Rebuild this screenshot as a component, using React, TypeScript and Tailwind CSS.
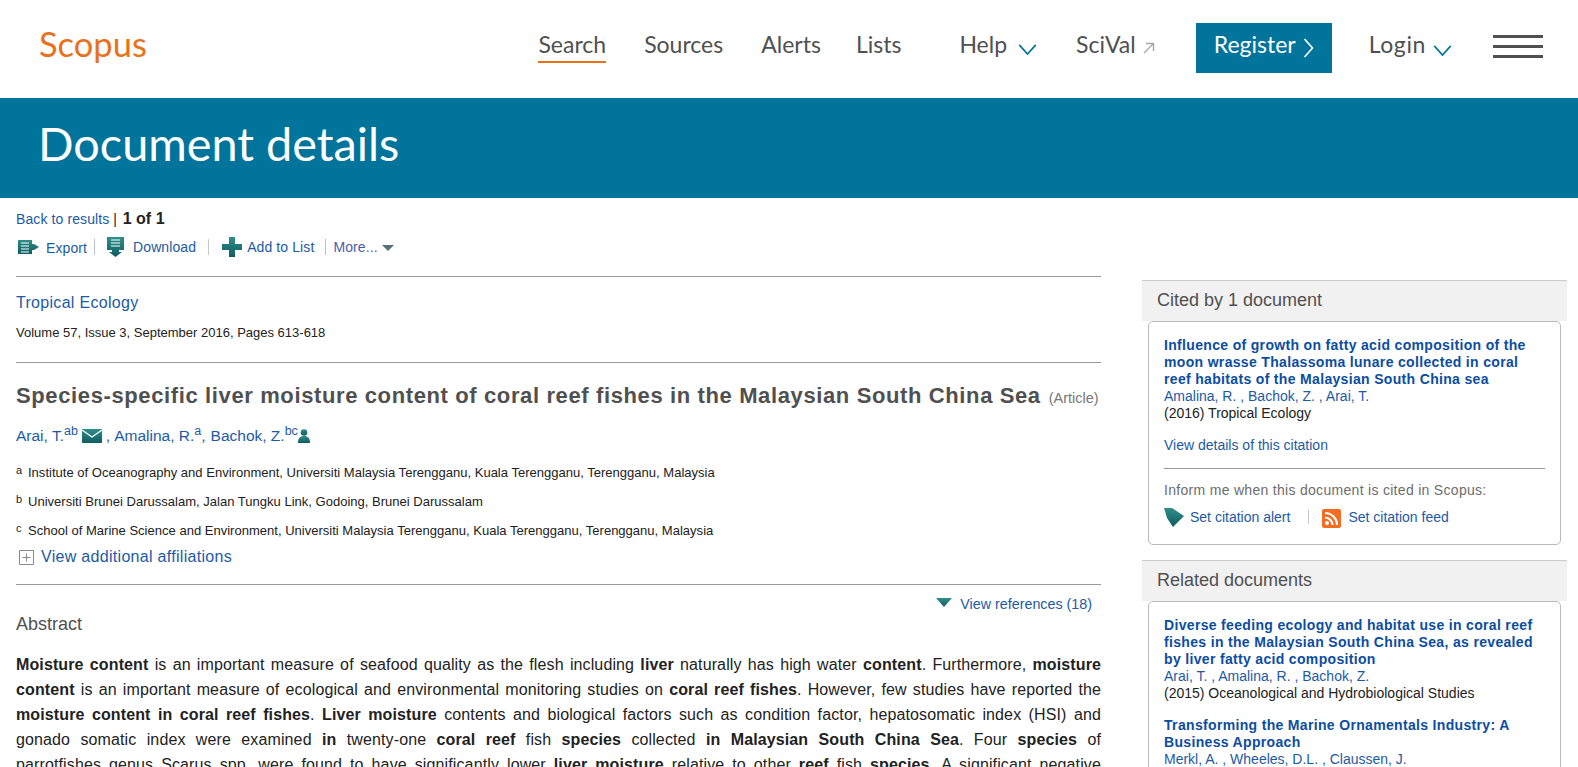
import React from "react";

const arial = "font-['Liberation_Sans',Arial,sans-serif]";
const lato = "font-['Lato',sans-serif]";
const link = "text-[#1d5aa5]";
const teal = "url(#teal)";

const Chevron = ({ className }: { className: string }) => (
  <svg className={className} viewBox="0 0 20 12" fill="none" stroke="currentColor" strokeWidth="1.8">
    <path d="M1 1l9 10 9-10" />
  </svg>
);

const NavItem = ({ label, active, wide }: { label: string; active?: boolean; wide?: boolean }) => (
  <a className={`block text-[#505050] text-[23px] leading-[23px] pb-[5px] border-b-2 -mt-[1px] ${wide ? "tracking-[0.6px]" : ""} ${active ? "border-[#e9711c]" : "border-transparent"}`}>{label}</a>
);

const Header = () => (
  <div className={`${lato} h-[98px] bg-white flex items-center pl-[39px] pr-[35px] pb-[2px]`}>
    <a className="text-[#e9711c] text-[34.5px] leading-none -mt-[8px]">Scopus</a>
    <div className="ml-auto flex items-center">
      <NavItem label="Search" active />
      <div className="ml-[38px]"><NavItem label="Sources" /></div>
      <div className="ml-[38px]"><NavItem label="Alerts" /></div>
      <div className="ml-[35px]"><NavItem label="Lists" /></div>
      <div className="ml-[58px] flex items-center">
        <NavItem label="Help" />
        <Chevron className="w-[19px] h-[11px] ml-[11px] mt-[2px] text-[#00749b]" />
      </div>
      <div className="ml-[39px] flex items-center">
        <NavItem label="SciVal" />
        <svg className="w-[12px] h-[12px] ml-[7px] text-[#a8a8a8]" viewBox="0 0 12 12" fill="none" stroke="currentColor" strokeWidth="1.4">
          <path d="M1 11L10.5 1.5M3 1.5h7.5V9" />
        </svg>
      </div>
      <a className="ml-[41px] w-[136px] h-[50px] bg-[#00749b] text-white text-[23px] flex items-center justify-center pb-[8px]">
        Register
        <svg className="w-[11px] h-[20px] ml-[7px] mt-[8px]" viewBox="0 0 11 20" fill="none" stroke="currentColor" strokeWidth="1.6">
          <path d="M1.5 1l8 9-8 9" />
        </svg>
      </a>
      <div className="ml-[37px] flex items-center">
        <NavItem label="Login" wide />
        <Chevron className="w-[19px] h-[11px] ml-[7px] mt-[4px] text-[#00749b]" />
      </div>
      <div className="ml-[41px] w-[50px] flex flex-col gap-[7px] -mt-[4px]">
        <div className="h-[3px] bg-[#505050]" />
        <div className="h-[3px] bg-[#505050]" />
        <div className="h-[3px] bg-[#505050]" />
      </div>
    </div>
  </div>
);

const Banner = () => (
  <div className={`${lato} h-[100px] bg-[#00749b] flex items-center pl-[38px]`}>
    <h1 className="text-white text-[46.8px] font-normal leading-none -mt-[10px]">Document details</h1>
  </div>
);

const Toolbar = () => (
  <div className="text-[14px] leading-[20px]">
    <div className="pt-[11px] text-[#222]">
      <a className={`${link} tracking-[0.1px]`}>Back to results</a> | <b className="text-[16px] ml-[2px]">1 of 1</b>
    </div>
    <div className="flex items-center mt-[6px] h-[24px] tracking-[0.1px]">
      <svg className="w-[21px] h-[16px] ml-[2px]" viewBox="0 0 21 16">
        <path d="M0 1h14v4h2l5 3-5 3h-2v4H0z" fill={teal} />
        <path d="M3 4h8M3 7h8M3 10h8M3 13h8" stroke="#fff" strokeWidth="1.2" />
      </svg>
      <a className={`${link} ml-[7px] mt-[2px]`}>Export</a>
      <span className="ml-[7px] w-px h-[16px] bg-[#b9c2cc]" />
      <svg className="w-[17px] h-[20px] ml-[12px]" viewBox="0 0 17 20">
        <path d="M0 0h17v13h-5v2h3l-6.500 5L2 15h3v-2H0z" fill={teal} />
        <path d="M4 3h9M4 6h9M4 9h9" stroke="#fff" strokeWidth="1.1" />
      </svg>
      <a className={`${link} ml-[9px]`}>Download</a>
      <span className="ml-[12px] w-px h-[16px] bg-[#c9c9c9]" />
      <svg className="w-[20px] h-[20px] ml-[13px]" viewBox="0 0 20 20">
        <path d="M7 0h6v7h7v6h-7v7H7v-7H0V7h7z" fill={teal} />
      </svg>
      <a className={`${link} ml-[5px]`}>Add to List</a>
      <span className="ml-[11px] w-px h-[16px] bg-[#b9c2cc]" />
      <a className="text-[#4a5cab] ml-[7px]">More...</a>
      <svg className="w-[12px] h-[6px] ml-[4px] mt-[2px]" viewBox="0 0 12 6">
        <path d="M0 0h12L6 6z" fill="#54707a" />
      </svg>
    </div>
  </div>
);

const Sup = ({ children }: { children: React.ReactNode }) => (
  <sup className="text-[12.5px] top-[-5px]">{children}</sup>
);

const Affiliation = ({ mark, text }: { mark: string; text: string }) => (
  <div className="flex h-[29px] items-center text-[13.04px] text-[#222]">
    <span className="w-[12px] text-[11px] -mt-[5px]">{mark}</span>
    <span>{text}</span>
  </div>
);

const Article = () => (
  <div>
    <div className="mt-[17px] border-t border-[#999] pt-[14px] h-[87px] border-b">
      <a className={`${link} text-[16px] tracking-[0.3px] leading-[24px] block`}>Tropical Ecology</a>
      <div className="text-[13px] text-[#222] mt-[8px]">Volume 57, Issue 3, September 2016, Pages 613-618</div>
    </div>
    <div className="flex items-baseline mt-[19px]">
      <h2 className="font-bold text-[#505050] text-[22px] leading-[28px] whitespace-nowrap tracking-[0.62px]">
        Species-specific liver moisture content of coral reef fishes in the Malaysian South China Sea
      </h2>
      <span className="ml-[8px] text-[#777] text-[14.5px]">(Article)</span>
    </div>
    <div className={`flex items-center mt-[12px] h-[28px] text-[15.5px] ${link}`}>
      <a>Arai, T.</a><Sup>ab</Sup>
      <svg className="w-[20px] h-[14px] ml-[4px]" viewBox="0 0 20 14">
        <path d="M0 0h20v14H0z" fill={teal} />
        <path d="M0 1l10 7 10-7" fill="none" stroke="#fff" strokeWidth="1.3" />
      </svg>
      <span className="ml-[4px]">,</span>
      <a className="ml-[4px]">Amalina, R.</a><Sup>a</Sup><span>,</span>
      <a className="ml-[5px]">Bachok, Z.</a><Sup>bc</Sup>
      <svg className="w-[12px] h-[14px]" viewBox="0 0 12 14">
        <circle cx="6" cy="3.500" r="3.300" fill={teal} />
        <path d="M0 14c0-5 2-7 6-7s6 2 6 7z" fill={teal} />
      </svg>
    </div>
    <div className="mt-[8px]">
      <Affiliation mark="a" text="Institute of Oceanography and Environment, Universiti Malaysia Terengganu, Kuala Terengganu, Terengganu, Malaysia" />
      <Affiliation mark="b" text="Universiti Brunei Darussalam, Jalan Tungku Link, Godoing, Brunei Darussalam" />
      <Affiliation mark="c" text="School of Marine Science and Environment, Universiti Malaysia Terengganu, Kuala Terengganu, Terengganu, Malaysia" />
    </div>
    <div className="flex items-center mt-[2px] h-[20px]">
      <svg className="w-[15px] h-[15px] ml-[3px]" viewBox="0 0 15 15" fill="none" stroke="#8a8a8a" strokeWidth="1">
        <path d="M.5.5h14v14H.5zM7.500 3.500v8M3.500 7.500h8" />
      </svg>
      <a className={`${link} text-[16px] tracking-[0.3px] ml-[7px]`}>View additional affiliations</a>
    </div>
    <div className="mt-[17px] border-t border-[#999] h-[30px] pt-[10px] flex items-center justify-end pr-[9px]">
      <svg className="w-[16px] h-[9px] -mt-[4px]" viewBox="0 0 16 9">
        <path d="M0 0h16L8 9z" fill={teal} />
      </svg>
      <a className={`${link} text-[14.3px] ml-[8px]`}>View references (18)</a>
    </div>
    <h3 className="text-[#505050] text-[18px] leading-[26px] -mt-[3px]">Abstract</h3>
    <p className="mt-[15px] text-[16px] tracking-[0.12px] leading-[25px] text-[#222] text-justify [text-align-last:justify]">
      <b>Moisture content</b> is an important measure of seafood quality as the flesh including <b>liver</b> naturally has high water <b>content</b>. Furthermore, <b>moisture</b><br />
      <b>content</b> is an important measure of ecological and environmental monitoring studies on <b>coral reef fishes</b>. However, few studies have reported the<br />
      <b>moisture content in coral reef fishes</b>. <b>Liver moisture</b> contents and biological factors such as condition factor, hepatosomatic index (HSI) and<br />
      gonado somatic index were examined <b>in</b> twenty-one <b>coral reef</b> fish <b>species</b> collected <b>in Malaysian South China Sea</b>. Four <b>species</b> of<br />
      parrotfishes genus Scarus spp. were found to have significantly lower <b>liver moisture</b> relative to other <b>reef</b> fish <b>species</b>. A significant negative
    </p>
  </div>
);

const SideHead = ({ title }: { title: string }) => (
  <div className="h-[41px] bg-[#f1f1f1] border-t border-[#ccc] pl-[15px] pb-[2px] flex items-center text-[18px] text-[#505050]">{title}</div>
);

const Cite = ({ title, authors, source }: { title: string; authors: string; source?: string }) => (
  <div className="text-[14px] leading-[17px]">
    <a className="block font-bold text-[#0c4da2] tracking-[0.33px]">{title}</a>
    <div className={link}>{authors}</div>
    {source && <div className="text-[#222]">{source}</div>}
  </div>
);

const Sidebar = () => (
  <div className="w-[425px] shrink-0 ml-auto -translate-x-px mt-[82px]">
    <SideHead title="Cited by 1 document" />
    <div className="mx-[6px] rounded-[5px] border border-[#bbb] h-[224px] pt-[15px] px-[15px]">
      <Cite
        title="Influence of growth on fatty acid composition of the moon wrasse Thalassoma lunare collected in coral reef habitats of the Malaysian South China sea"
        authors="Amalina, R. , Bachok, Z. , Arai, T."
        source="(2016) Tropical Ecology"
      />
      <a className={`${link} block text-[14px] leading-[17px] mt-[15px]`}>View details of this citation</a>
      <div className="border-t border-[#999] mt-[14px]" />
      <div className="text-[#6d6d6d] text-[14px] tracking-[0.3px] leading-[17px] mt-[13px]">Inform me when this document is cited in Scopus:</div>
      <div className="flex items-center mt-[8px] text-[14px] h-[20px]">
        <svg className="w-[20px] h-[20px]" viewBox="0 0 20 20">
          <path d="M0 1h8l12 8-11 11-6-9z" fill={teal} />
        </svg>
        <a className={`${link} ml-[6px]`}>Set citation alert</a>
        <span className="ml-[18px] w-px h-[14px] bg-[#c9c9c9]" />
        <svg className="w-[19px] h-[19px] ml-[13px] mt-[3px]" viewBox="0 0 19 19">
          <rect width="19" height="19" rx="2" fill="#f26d21" />
          <circle cx="5" cy="14" r="2" fill="#fff" />
          <path d="M3 8.500a7.500 7.500 0 0 1 7.500 7.500M3 4a12 12 0 0 1 12 12" fill="none" stroke="#fff" strokeWidth="2.2" />
        </svg>
        <a className={`${link} ml-[7px]`}>Set citation feed</a>
      </div>
    </div>
    <div className="mt-[15px]">
      <SideHead title="Related documents" />
    </div>
    <div className="mx-[6px] rounded-t-[5px] border border-[#bbb] h-[200px] pt-[15px] px-[15px]">
      <Cite
        title="Diverse feeding ecology and habitat use in coral reef fishes in the Malaysian South China Sea, as revealed by liver fatty acid composition"
        authors="Arai, T. , Amalina, R. , Bachok, Z."
        source="(2015) Oceanological and Hydrobiological Studies"
      />
      <div className="mt-[15px]">
        <Cite
          title="Transforming the Marine Ornamentals Industry: A Business Approach"
          authors="Merkl, A. , Wheeles, D.L. , Claussen, J."
        />
      </div>
    </div>
  </div>
);

export default function App() {
  return (
    <div className={`${arial} h-[767px] overflow-hidden bg-white`}>
      <svg className="absolute w-0 h-0">
        <defs>
          <linearGradient id="teal" x1="0" y1="0" x2="0" y2="1">
            <stop offset="0" stopColor="#2f8f8a" />
            <stop offset="1" stopColor="#0f5c60" />
          </linearGradient>
        </defs>
      </svg>
      <Header />
      <Banner />
      <div className="flex pl-[16px] pr-[10px]">
        <div className="w-[1085px] shrink-0">
          <Toolbar />
          <Article />
        </div>
        <Sidebar />
      </div>
    </div>
  );
}
